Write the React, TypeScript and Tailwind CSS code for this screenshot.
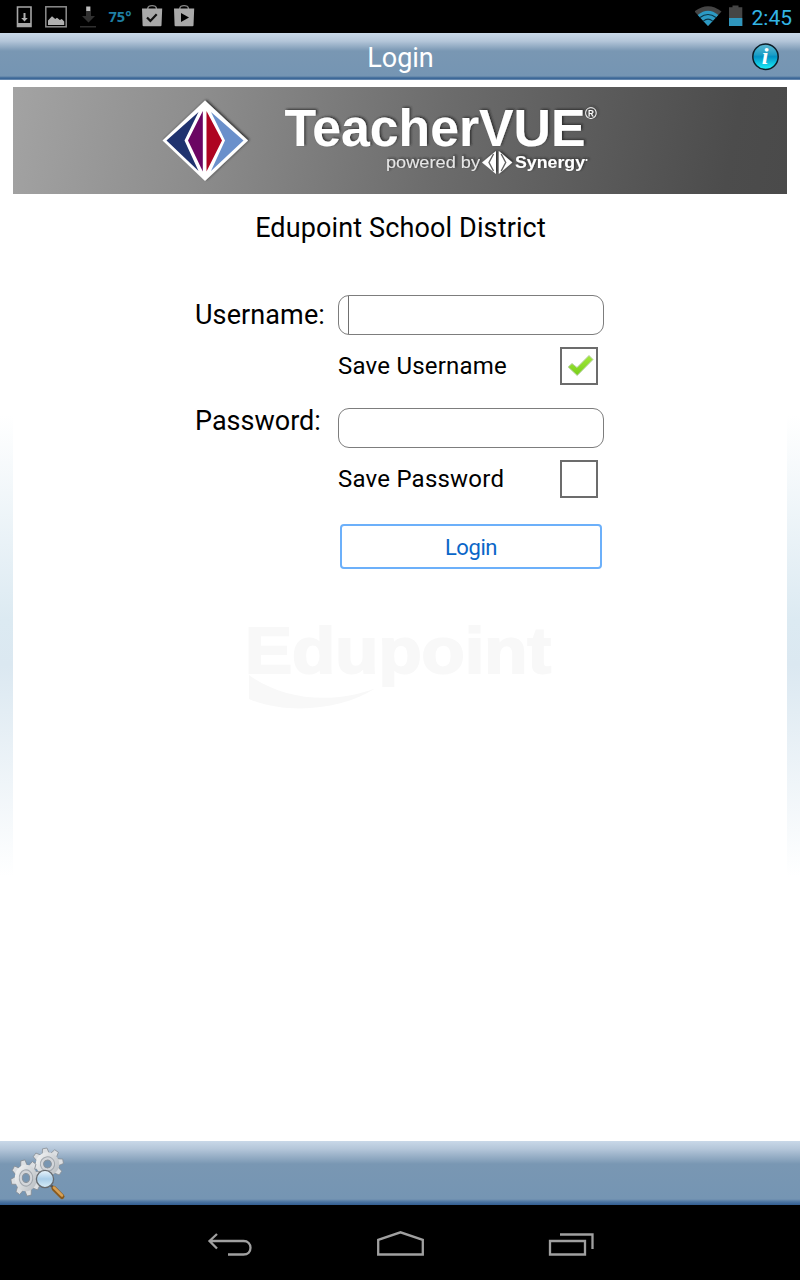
import { useState, type ReactNode } from "react";

export default function App() {
  const [saveUsername, setSaveUsername] = useState(true);
  const [savePassword, setSavePassword] = useState(false);

  return (
    <div className="flex h-[1280px] w-[800px] flex-col overflow-hidden bg-white font-[Roboto,sans-serif] text-black">
      <StatusBar />
      <header className="grid h-[47px] shrink-0 grid-cols-[1fr_auto_1fr] items-center bg-[linear-gradient(#c9d8e8_0px,#b4c6d9_8px,#7997b3_18px,#7595b3_43px,#3c6797_45px,#3c6797_46px,#8ba5c3_47px)] pr-[20px] pl-[21px]">
        <span />
        <h1 className="pt-[2px] text-[27px] leading-[47px] text-white">
          Login
        </h1>
        <InfoIcon />
      </header>

      <main className="flex flex-1">
        <SideGlow />
        <div className="flex flex-1 flex-col items-center pt-[7px]">
          <Banner />
          <h2 className="mt-[17px] pl-px text-[27px] leading-[34px] tracking-[0.13px]">
            Edupoint School District
          </h2>

          <form className="mt-[50px] grid w-[410px] grid-cols-[143px_267px]">
            <label className="pt-[3px] text-[27px] leading-[34px] tracking-[0.1px]">
              Username:
            </label>
            <div className="flex h-10 w-[266px] rounded-[11px] border border-[#7d7d7d] pl-[9px]">
              <span className="w-px bg-[#707070]" />
            </div>
            <CheckRow
              label="Save Username"
              checked={saveUsername}
              onToggle={() => setSaveUsername(!saveUsername)}
            />
            <label className="mt-[21px] text-[27px] leading-[30px]">
              Password:
            </label>
            <div className="mt-[23px] h-10 w-[266px] rounded-[11px] border border-[#7d7d7d]" />
            <CheckRow
              label="Save Password"
              checked={savePassword}
              onToggle={() => setSavePassword(!savePassword)}
            />
            <button
              type="button"
              className="col-start-2 mt-[26px] ml-[2px] h-[45px] w-[262px] rounded-[4px] border-2 border-[#6cb0fa] pt-[2px] text-[22px] tracking-[-0.4px] text-[#0a66c8]"
            >
              Login
            </button>
          </form>

          <Watermark />
        </div>
        <SideGlow />
      </main>

      <footer className="flex h-16 shrink-0 items-center bg-[linear-gradient(#c9d8e8_0px,#b4c6d9_8px,#7997b3_23px,#7595b3_58px,#4a73a0_61px,#335e91_64px)] pl-[10px]">
        <SettingsIcon />
      </footer>
      <NavBar />
    </div>
  );
}

function CheckRow({
  label,
  checked,
  onToggle,
}: {
  label: string;
  checked: boolean;
  onToggle: () => void;
}) {
  return (
    <div className="col-start-2 mt-3 flex h-[38px] items-center justify-between pr-[7px]">
      <span className="text-2xl tracking-[0.22px]">{label}</span>
      <button
        type="button"
        onClick={onToggle}
        className="flex size-[38px] items-center justify-center border-2 border-[#6c6c6c]"
      >
        {checked && (
          <svg width="28" height="24" viewBox="0 0 28 24" className="ml-px">
            <defs>
              <linearGradient id="tick" x1="0" y1="0" x2="0" y2="1">
                <stop offset="0" stopColor="#a3e83c" />
                <stop offset="1" stopColor="#77cf18" />
              </linearGradient>
            </defs>
            <path
              d="M2.200 13 6 9.500l5 4L23 1.500l4 4L11.200 21.500z"
              fill="url(#tick)"
              stroke="#b9cfa5"
              strokeWidth="1"
              strokeLinejoin="round"
            />
          </svg>
        )}
      </button>
    </div>
  );
}

function SideGlow() {
  return (
    <div className="w-[13px] bg-[linear-gradient(#fff_335px,#dceaf2_540px,#dbe8f1_585px,#fff_797px)]" />
  );
}

function StatusBar() {
  return (
    <div className="flex h-[33px] shrink-0 items-center justify-between bg-black">
      <svg width="210" height="33" viewBox="0 0 210 33">
        {/* device download */}
        <path
          d="M17.500 7h13.500v19.500h-13.500z"
          fill="none"
          stroke="#a6a6a6"
          strokeWidth="1.6"
        />
        <path d="M17 23h14v4H17z" fill="#a6a6a6" />
        <path d="M23.500 13h2v5h2.300l-3.300 3.500-3.300-3.500h2.300z" fill="#b0b0b0" />
        {/* picture */}
        <rect
          x="45.8"
          y="6.8"
          width="20.4"
          height="20"
          fill="none"
          stroke="#8d8d8d"
          strokeWidth="1.5"
        />
        <path
          d="M48 25v-4.500l4-4.200 3.200 2.800 1.800-1.300 2.800 2.300 2-1.200 2.400 2.500V25z"
          fill="#b0b0b0"
        />
        {/* download in progress */}
        <path d="M86 11h5v5h4l-6.500 6.500L82 16h4zM80 26h16v1.500H80z" fill="#303030" />
        <path d="M86.200 6.500h4.200v4.500h-4.200z" fill="#bdbdbd" />
        <text
          x="108.5"
          y="22"
          textLength="23"
          lengthAdjust="spacingAndGlyphs"
          className="fill-[#1f7fa3] font-[Open_Sans,sans-serif] text-[15px] font-bold"
        >
          75°
        </text>
        <ShopBag x={142}>
          <path d="m5 11.500 3.400 3.400 6.300-6.600" fill="none" stroke="#111" strokeWidth="2.2" />
        </ShopBag>
        <ShopBag x={174}>
          <path d="M7 7v9l8-4.500z" fill="#000" />
        </ShopBag>
      </svg>

      <div className="flex items-center pr-[8px]">
        <svg width="50" height="33" viewBox="694.500 0 50 33" className="mr-[7px]">
          <path d="M694 11.500Q707.500 1 721 11.500L707.500 26z" fill="#454545" />
          <path d="M697.200 15Q707.500 6.500 717.800 15L707.500 26z" fill="#2c9ac4" />
          <path
            d="M699.500 17.500Q707.500 11.500 715.500 17.500M702.800 21.200Q707.500 17 712.200 21.200"
            fill="none"
            stroke="#0b3545"
            strokeWidth="1.1"
          />
          <path d="M728.500 7.200h3.500V5.500h6v1.700h3.800V26h-13.300z" fill="#454545" />
          <path d="M728.500 18h13.300v8h-13.300z" fill="#2f96bd" />
        </svg>
        <span className="pt-[3px] text-[21px] leading-[30px] text-[#33b5e5]">
          2:45
        </span>
      </div>
    </div>
  );
}

function ShopBag({ x, children }: { x: number; children: ReactNode }) {
  return (
    <g transform={`translate(${x} 0)`}>
      <path d="M5.800 9.500V8.500a4.300 2.900 0 0 1 8.600 0v1" fill="none" stroke="#888" strokeWidth="1.4" />
      <path d="M0 8.500h20.200l-.7 17a1 1 0 0 1-1 .8H1.600a1 1 0 0 1-1-.8z" fill="#a9a9a9" />
      <g transform="translate(0 6)">{children}</g>
    </g>
  );
}

function InfoIcon() {
  return (
    <svg width="28" height="28" viewBox="0 0 28 28" className="mb-[2px] justify-self-end">
      <defs>
        <linearGradient id="info" x1="0" y1="0" x2="0" y2="1">
          <stop offset="0" stopColor="#61b9d2" />
          <stop offset=".42" stopColor="#1b9ec6" />
          <stop offset=".5" stopColor="#0291c4" />
          <stop offset="1" stopColor="#1df3fb" />
        </linearGradient>
      </defs>
      <circle cx="13.500" cy="13.700" r="12.700" fill="url(#info)" stroke="#0c1c26" strokeWidth="1.500" />
      <text
        x="13.200"
        y="21.200"
        textAnchor="middle"
        className="fill-white font-[Liberation_Serif,serif] text-[24px] font-bold italic"
      >
        i
      </text>
    </svg>
  );
}

function Banner() {
  return (
    <svg
      width="774"
      height="107"
      viewBox="13 87 774 107"
      className="shrink-0 bg-[linear-gradient(100deg,#a3a3a3_0%,#8c8c8c_25%,#6c6c6c_55%,#4c4c4c_92%,#4a4a4a_100%)]"
    >
      <defs>
        <filter id="shadow" x="-10%" y="-10%" width="120%" height="130%">
          <feDropShadow dx="1.500" dy="-1" stdDeviation="1" floodColor="#222" floodOpacity=".8" />
        </filter>
      </defs>
      <g filter="url(#shadow)">
        <path d="M205 100.500 248 140.500 205 181 162.500 140.500z" fill="#fff" />
      </g>
      <path d="M198.500 112 184.500 140.500 198.500 171 166.500 140.500z" fill="#20336f" />
      <path d="M202.800 111v60.500L188 140.500z" fill="#6b0563" />
      <path d="M206.500 111v60.500l15.500-31z" fill="#ae0421" />
      <path d="M211 112 225 140.500 211 171 243.500 140.500z" fill="#6a90cb" />

      <g filter="url(#shadow)" fill="#fff">
        <text
          x="284.500"
          y="145.500"
          textLength="301"
          lengthAdjust="spacingAndGlyphs"
          className="font-[Liberation_Sans,sans-serif] text-[51px] font-bold"
        >
          TeacherVUE
        </text>
        <text x="585" y="118.500" className="font-[Liberation_Sans,sans-serif] text-[16px]">
          ®
        </text>
        <text
          x="386"
          y="168"
          textLength="94"
          lengthAdjust="spacingAndGlyphs"
          className="font-[Liberation_Sans,sans-serif] text-[17px]"
          fill="#e6e6e6"
        >
          powered by
        </text>
        <path d="M496 151v23l-14-11.500zM498.800 151v23l13.500-11.500z" />
        <text
          x="515"
          y="168"
          textLength="70"
          lengthAdjust="spacingAndGlyphs"
          className="font-[Liberation_Sans,sans-serif] text-[17px] font-bold"
        >
          Synergy
        </text>
        <circle cx="586.500" cy="160" r="1" />
      </g>
      <path
        d="M493.500 154 489 162.500l4.500 8.500M501.200 154l4.500 8.500-4.500 8.500"
        fill="none"
        stroke="#606060"
        strokeWidth="1.4"
      />
    </svg>
  );
}

function Watermark() {
  return (
    <svg width="320" height="104" viewBox="240 608 320 104" className="mt-[39px]" fill="#f8f8f8">
      <text
        x="245"
        y="672.500"
        textLength="306"
        lengthAdjust="spacingAndGlyphs"
        className="font-[Liberation_Sans,sans-serif] text-[64px] font-bold"
        stroke="#f8f8f8"
        strokeWidth="2"
      >
        Edupoint
      </text>
      <path d="M249 675C282 699 331 705 375 688.500 342 710 287 715 249 699z" />
    </svg>
  );
}

// one gear centred on 0,0
function Gear() {
  return (
    <g>
      {[0, 45, 90, 135, 180, 225, 270, 315].map((deg) => (
        <path
          key={deg}
          d="M-3.500-10-2.200-15.500h4.400l1.300 5.500z"
          transform={`rotate(${deg})`}
          fill="#dcdfe2"
          stroke="#858b92"
          strokeWidth=".7"
        />
      ))}
      <circle r="11.500" fill="url(#steel)" />
      <circle r="7" fill="#d3d6da" stroke="#a3a9af" strokeWidth="1" />
      <circle r="3.800" fill="#7896b2" stroke="#8b939b" strokeWidth="1" />
    </g>
  );
}

function SettingsIcon() {
  return (
    <svg width="56" height="56" viewBox="10 1145 56 56">
      <defs>
        <linearGradient id="steel" x1="0" y1="0" x2="1" y2="1">
          <stop offset="0" stopColor="#f7f8f8" />
          <stop offset="1" stopColor="#b4b9be" />
        </linearGradient>
        <linearGradient id="lens" x1="0" y1="0" x2="0" y2="1">
          <stop offset="0" stopColor="#eaf5fc" />
          <stop offset=".5" stopColor="#a9cde8" />
          <stop offset="1" stopColor="#d8edf8" />
        </linearGradient>
      </defs>
      <g transform="translate(47.500 1164) rotate(-10) scale(1.020)">
        <Gear />
      </g>
      <g transform="translate(26 1178) scale(.97 1.160) rotate(-12)">
        <Gear />
      </g>
      <path d="m50.500 1185 4 3.500" stroke="#555" strokeWidth="2.500" />
      <path d="m54 1188.500 8 8" stroke="#8a5a1c" strokeWidth="5" strokeLinecap="round" />
      <path d="m54 1187.500 8 8" stroke="#d6a055" strokeWidth="2.500" strokeLinecap="round" />
      <circle cx="45" cy="1179" r="8.600" fill="url(#lens)" stroke="#666a6e" strokeWidth="1.300" />
    </svg>
  );
}

function NavBar() {
  return (
    <nav className="flex h-[75px] shrink-0 items-center justify-between bg-black pt-[3px] pr-[206px] pl-[207px]">
      <svg width="46" height="26" viewBox="207 1231 46 26" fill="none" stroke="#a0a0a0" strokeWidth="2.3">
        <path d="m217 1234-7.500 7 7.500 7.500M210 1241h33.500c4.500 0 7 3 7 6.800s-2.500 6.700-7 6.700H228" />
      </svg>
      <svg width="48" height="26" viewBox="376.500 1231 48 26" fill="none" stroke="#a0a0a0" strokeWidth="2.3">
        <path d="M377.700 1254.500v-14.700l22.300-7.500 22.300 7.500v14.700z" />
      </svg>
      <svg width="46" height="26" viewBox="548 1231 46 26" fill="none" stroke="#a0a0a0" strokeWidth="2.3">
        <path d="M550 1241h35v13.500h-35zM560 1234.500h32.500v14.500" />
      </svg>
    </nav>
  );
}
